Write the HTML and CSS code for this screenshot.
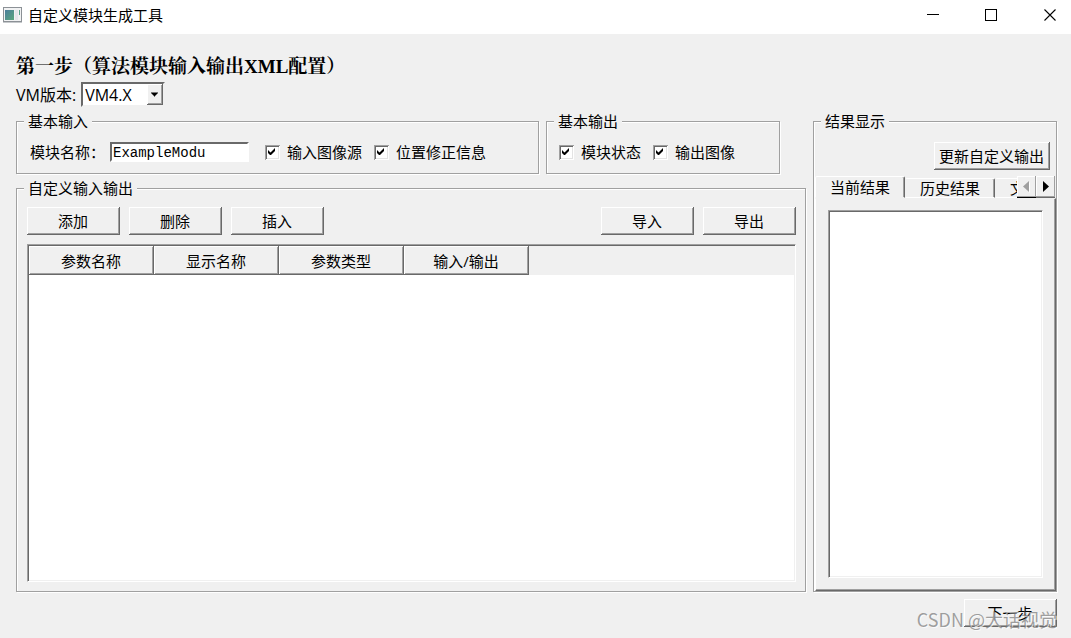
FILE: index.html
```html
<!DOCTYPE html>
<html lang="zh-CN">
<head>
<meta charset="utf-8">
<title>自定义模块生成工具</title>
<link rel="stylesheet" href="styles.css">
</head>
<body>
<header class="titlebar">
  <svg class="app-icon" width="19" height="16" viewBox="0 0 19 16" aria-hidden="true">
    <defs>
      <linearGradient id="screen" x1="0" y1="0" x2="1" y2="1">
        <stop offset="0" stop-color="#4a7d9c"/><stop offset="1" stop-color="#58a87c"/>
      </linearGradient>
    </defs>
    <rect x="0.5" y="0.5" width="18" height="14" fill="#f1f2f3" stroke="#8c9196"/>
    <path d="M0 15.5h19" stroke="#c6c9cc"/>
    <rect x="2" y="3" width="9" height="10" fill="url(#screen)"/>
    <rect x="12" y="3" width="3" height="10" fill="#e3e7ea"/>
    <rect x="16" y="3" width="1" height="5" fill="#5aa38c"/>
  </svg>
  <span class="window-title">自定义模块生成工具</span>
  <div class="window-controls">
    <button class="window-btn" type="button" aria-label="最小化"><svg width="13" height="13" viewBox="0 0 13 13"><path d="M1 5.5h12" stroke="#000"/></svg></button>
    <button class="window-btn" type="button" aria-label="最大化"><svg width="13" height="13" viewBox="0 0 13 13"><rect x="0.5" y="0.5" width="11" height="11" fill="none" stroke="#000"/></svg></button>
    <button class="window-btn" type="button" aria-label="关闭"><svg width="13" height="13" viewBox="0 0 13 13"><path d="M0.5 0.5l11 11M11.5 0.5l-11 11" stroke="#000" stroke-width="1.1"/></svg></button>
  </div>
</header>

<main class="page">
  <h1 class="step-title">第一步（算法模块输入输出XML配置）</h1>
  <div class="version-row">
    <label for="version">VM版本:</label>
    <span class="combo">
      <select id="version" class="combo-select"><option>VM4.X</option></select>
      <svg class="combo-arrow" width="16" height="20" viewBox="0 0 16 20" aria-hidden="true"><path d="M4 8h7v1h-1v1h-1v1h-1v1h-1v-1h-1v-1h-1v-1h-1z"/></svg>
    </span>
  </div>

  <div class="columns">
    <div class="left">
      <div class="basic-row">
        <fieldset class="group group-input">
          <legend>基本输入</legend>
          <div class="fields">
            <label class="name-label" for="module-name">模块名称：</label>
            <input id="module-name" class="text-input" type="text" value="ExampleModu">
            <label class="check"><input type="checkbox" checked><svg class="tick" viewBox="0 0 15 15" aria-hidden="true"><path d="M3 5v3l2 2h1l4-4V3L5.500 7.500z"/></svg>输入图像源</label>
            <label class="check"><input type="checkbox" checked><svg class="tick" viewBox="0 0 15 15" aria-hidden="true"><path d="M3 5v3l2 2h1l4-4V3L5.500 7.500z"/></svg>位置修正信息</label>
          </div>
        </fieldset>
        <fieldset class="group group-output">
          <legend>基本输出</legend>
          <div class="fields">
            <label class="check"><input type="checkbox" checked><svg class="tick" viewBox="0 0 15 15" aria-hidden="true"><path d="M3 5v3l2 2h1l4-4V3L5.500 7.500z"/></svg>模块状态</label>
            <label class="check"><input type="checkbox" checked><svg class="tick" viewBox="0 0 15 15" aria-hidden="true"><path d="M3 5v3l2 2h1l4-4V3L5.500 7.500z"/></svg>输出图像</label>
          </div>
        </fieldset>
      </div>

      <fieldset class="group group-custom">
        <legend>自定义输入输出</legend>
        <div class="custom-body">
          <div class="toolbar">
            <button class="btn" type="button">添加</button>
            <button class="btn" type="button">删除</button>
            <button class="btn" type="button">插入</button>
            <button class="btn push" type="button">导入</button>
            <button class="btn" type="button">导出</button>
          </div>
          <div class="sunken table-box">
            <div class="table-head">
              <table class="params">
                <thead><tr><th>参数名称</th><th>显示名称</th><th>参数类型</th><th>输入/输出</th></tr></thead>
              </table>
            </div>
          </div>
        </div>
      </fieldset>
    </div>

    <fieldset class="group group-result">
      <legend>结果显示</legend>
      <div class="result-body">
        <button class="btn update" type="button">更新自定义输出</button>
        <div class="tabs">
          <div class="tab-list" role="tablist">
            <button class="tab active" type="button" role="tab" aria-selected="true">当前结果</button>
            <button class="tab" type="button" role="tab" aria-selected="false">历史结果</button>
            <button class="tab" type="button" role="tab" aria-selected="false">文</button>
          </div>
          <button class="scroll-btn" type="button" aria-label="向左"><svg width="8" height="12" viewBox="0 0 8 12"><path d="M7 1v11L1 6.500z" fill="#fff"/><path d="M6 0v11L0 5.500z" fill="#a0a0a0"/></svg></button>
          <button class="scroll-btn" type="button" aria-label="向右"><svg width="8" height="12" viewBox="0 0 8 12"><path d="M1 0v11l6-5.500z"/></svg></button>
        </div>
        <div class="pane" role="tabpanel"><div class="sunken list"></div></div>
      </div>
    </fieldset>
  </div>

  <footer class="footer">
    <button class="btn" type="button">下一步</button>
    <span class="watermark">CSDN @大话视觉</span>
  </footer>
</main>
</body>
</html>
```
FILE: styles.css
```css
:root {
  --face: #f0f0f0;
  --light: #fff;
  --shade: #a0a0a0;
  --dark: #696969;
}

* { box-sizing: border-box; }

body {
  margin: 0;
  min-height: 100vh;
  display: flex;
  flex-direction: column;
  background: var(--face);
  color: #000;
  font: 15px/20px "Open Sans", "Noto Sans CJK SC", sans-serif;
  white-space: nowrap;
}

button, input, select { font: inherit; color: inherit; }

/* Title bar */
.titlebar {
  height: 34px;
  padding: 0 6px 4px 3px;
  display: flex;
  align-items: center;
  background: #fff;
}
.app-icon { margin-right: 6px; }
.window-controls { margin-left: auto; display: flex; gap: 29px; }
.window-btn {
  width: 30px;
  height: 30px;
  padding: 0;
  border: 0;
  background: none;
  display: flex;
  align-items: center;
  justify-content: center;
}

/* Page */
.page {
  flex: 1;
  display: flex;
  flex-direction: column;
  padding: 21px 14px 11px 16px;
}
.step-title {
  margin: 0;
  font: bold 19px/24px "Liberation Serif", "Noto Serif CJK SC", "Noto Sans CJK SC", serif;
}
.version-row { display: flex; align-items: center; gap: 5px; margin-top: 3px; font-size: 16px; }
.combo { position: relative; display: flex; }
.combo-select {
  appearance: none;
  width: 84px;
  height: 25px;
  margin: 0;
  padding: 0 18px 0 2px;
  border: 2px solid;
  border-color: var(--dark) var(--face) var(--face) var(--dark);
  border-radius: 0;
  outline: 0;
  background: #fff;
}
.combo-arrow {
  position: absolute;
  top: 2px;
  right: 2px;
  height: 21px;
  background: var(--face);
  box-shadow: inset -1px -1px var(--dark), inset 1px 1px var(--light), inset -2px -2px var(--shade);
  pointer-events: none;
}
.columns {
  flex: 1;
  display: grid;
  grid-template-columns: minmax(0, 1fr) 244px;
  gap: 7px;
  margin-top: 4px;
}
.left { display: flex; flex-direction: column; gap: 4px; }

/* Etched group boxes */
.group {
  min-width: 0;
  margin: 0;
  padding: 0;
  border: 1px solid var(--shade);
  box-shadow: 1px 1px var(--light), inset 1px 1px var(--light);
}
.group legend {
  margin-left: 7px;
  padding: 0 4px;
  line-height: 20px;
  background: var(--face);
}
.basic-row { display: flex; gap: 7px; padding-right: 26px; }
.group-input { flex: 1; }
.group-output { width: 234px; }
.fields { height: 42px; padding-left: 12px; display: flex; align-items: center; gap: 12px; }
.group-input .fields { padding-left: 13px; }
.name-label { margin-right: -7px; }
.text-input {
  width: 139px;
  height: 20px;
  margin-right: 4px;
  padding: 2px 1px 0;
  border: 2px solid;
  border-color: var(--dark) var(--light) var(--light) var(--dark);
  background: #fff;
  font: 14px/14px "Liberation Mono", monospace;
  outline: 0;
}
.check { position: relative; display: flex; align-items: center; gap: 7px; }
.check input {
  appearance: none;
  width: 15px;
  height: 15px;
  margin: 0;
  background: #fff;
  box-shadow: inset 1px 1px var(--shade), inset -1px -1px var(--light), inset 2px 2px var(--dark), inset -2px -2px #e3e3e3;
}
.tick { position: absolute; left: 0; width: 15px; height: 15px; display: none; pointer-events: none; }
.check input:checked + .tick { display: block; }

/* Raised buttons */
.btn {
  width: 93px;
  height: 28px;
  padding: 0 1px 1px 0;
  border: 0;
  background: var(--face);
  box-shadow: inset -1px -1px var(--dark), inset 1px 1px var(--light), inset -2px -2px var(--shade);
}
.push { margin-left: auto; }

.sunken {
  border: 1px solid;
  border-color: var(--shade) var(--light) var(--light) var(--shade);
  background: #fff;
  padding: 1px;
  box-shadow: inset 1px 1px var(--dark), inset -1px -1px var(--face);
}

/* Custom inputs and outputs */
.group-custom { flex: 1; }
.custom-body { height: 100%; padding: 9px 9px 9px 10px; display: flex; flex-direction: column; gap: 9px; }
.toolbar { display: flex; gap: 9px; }
.table-box { flex: 1; }
.table-head { background: var(--face); }
.params { border-collapse: collapse; table-layout: fixed; width: 500px; }
.params th {
  height: 29px;
  padding: 0 1px 0 0;
  font-weight: normal;
  box-shadow: inset -1px -1px var(--dark), inset 1px 1px var(--light), inset -2px -2px var(--shade);
}

/* Results */
.result-body { height: 100%; padding: 11px 0 0 1px; display: flex; flex-direction: column; }
.update { width: 116px; align-self: flex-end; margin: 0 6px 6px 0; }
.tabs { display: flex; height: 22px; padding-right: 1px; align-items: flex-end; }
.tab-list { flex: 1; min-width: 0; display: flex; align-items: flex-end; overflow: hidden; }
.tab {
  flex: none;
  height: 20px;
  padding: 0 14px;
  border: 1px solid;
  border-color: var(--light) var(--dark) var(--light) transparent;
  border-radius: 2px 2px 0 0;
  background: var(--face);
  box-shadow: inset -1px 0 var(--shade);
  line-height: 18px;
}
.tab.active { height: 22px; border-left-color: var(--light); border-bottom-color: transparent; }
.scroll-btn {
  width: 19px;
  height: 22px;
  padding: 0;
  border: 0;
  border-bottom: 1px solid #000;
  background: var(--face);
  box-shadow: inset -1px -1px var(--shade), inset 1px 1px var(--light);
  display: flex;
  align-items: center;
  justify-content: center;
}
.scroll-btn + .scroll-btn { border-bottom-color: var(--dark); }
.pane {
  flex: 1;
  display: flex;
  padding: 11px 12px 12px 12px;
  border: 1px solid;
  border-color: transparent var(--dark) var(--dark) var(--light);
  box-shadow: inset -1px -1px var(--shade);
}
.list { flex: 1; }

/* Footer */
.footer { position: relative; display: flex; justify-content: flex-end; margin-top: 7px; }
.watermark {
  position: absolute;
  right: 0;
  top: 8px;
  color: rgba(120, 120, 120, 0.7);
  font: 18px/24px "Noto Sans CJK SC", sans-serif;
  text-shadow: 1px 1px rgba(255, 255, 255, 0.7);
}
```
